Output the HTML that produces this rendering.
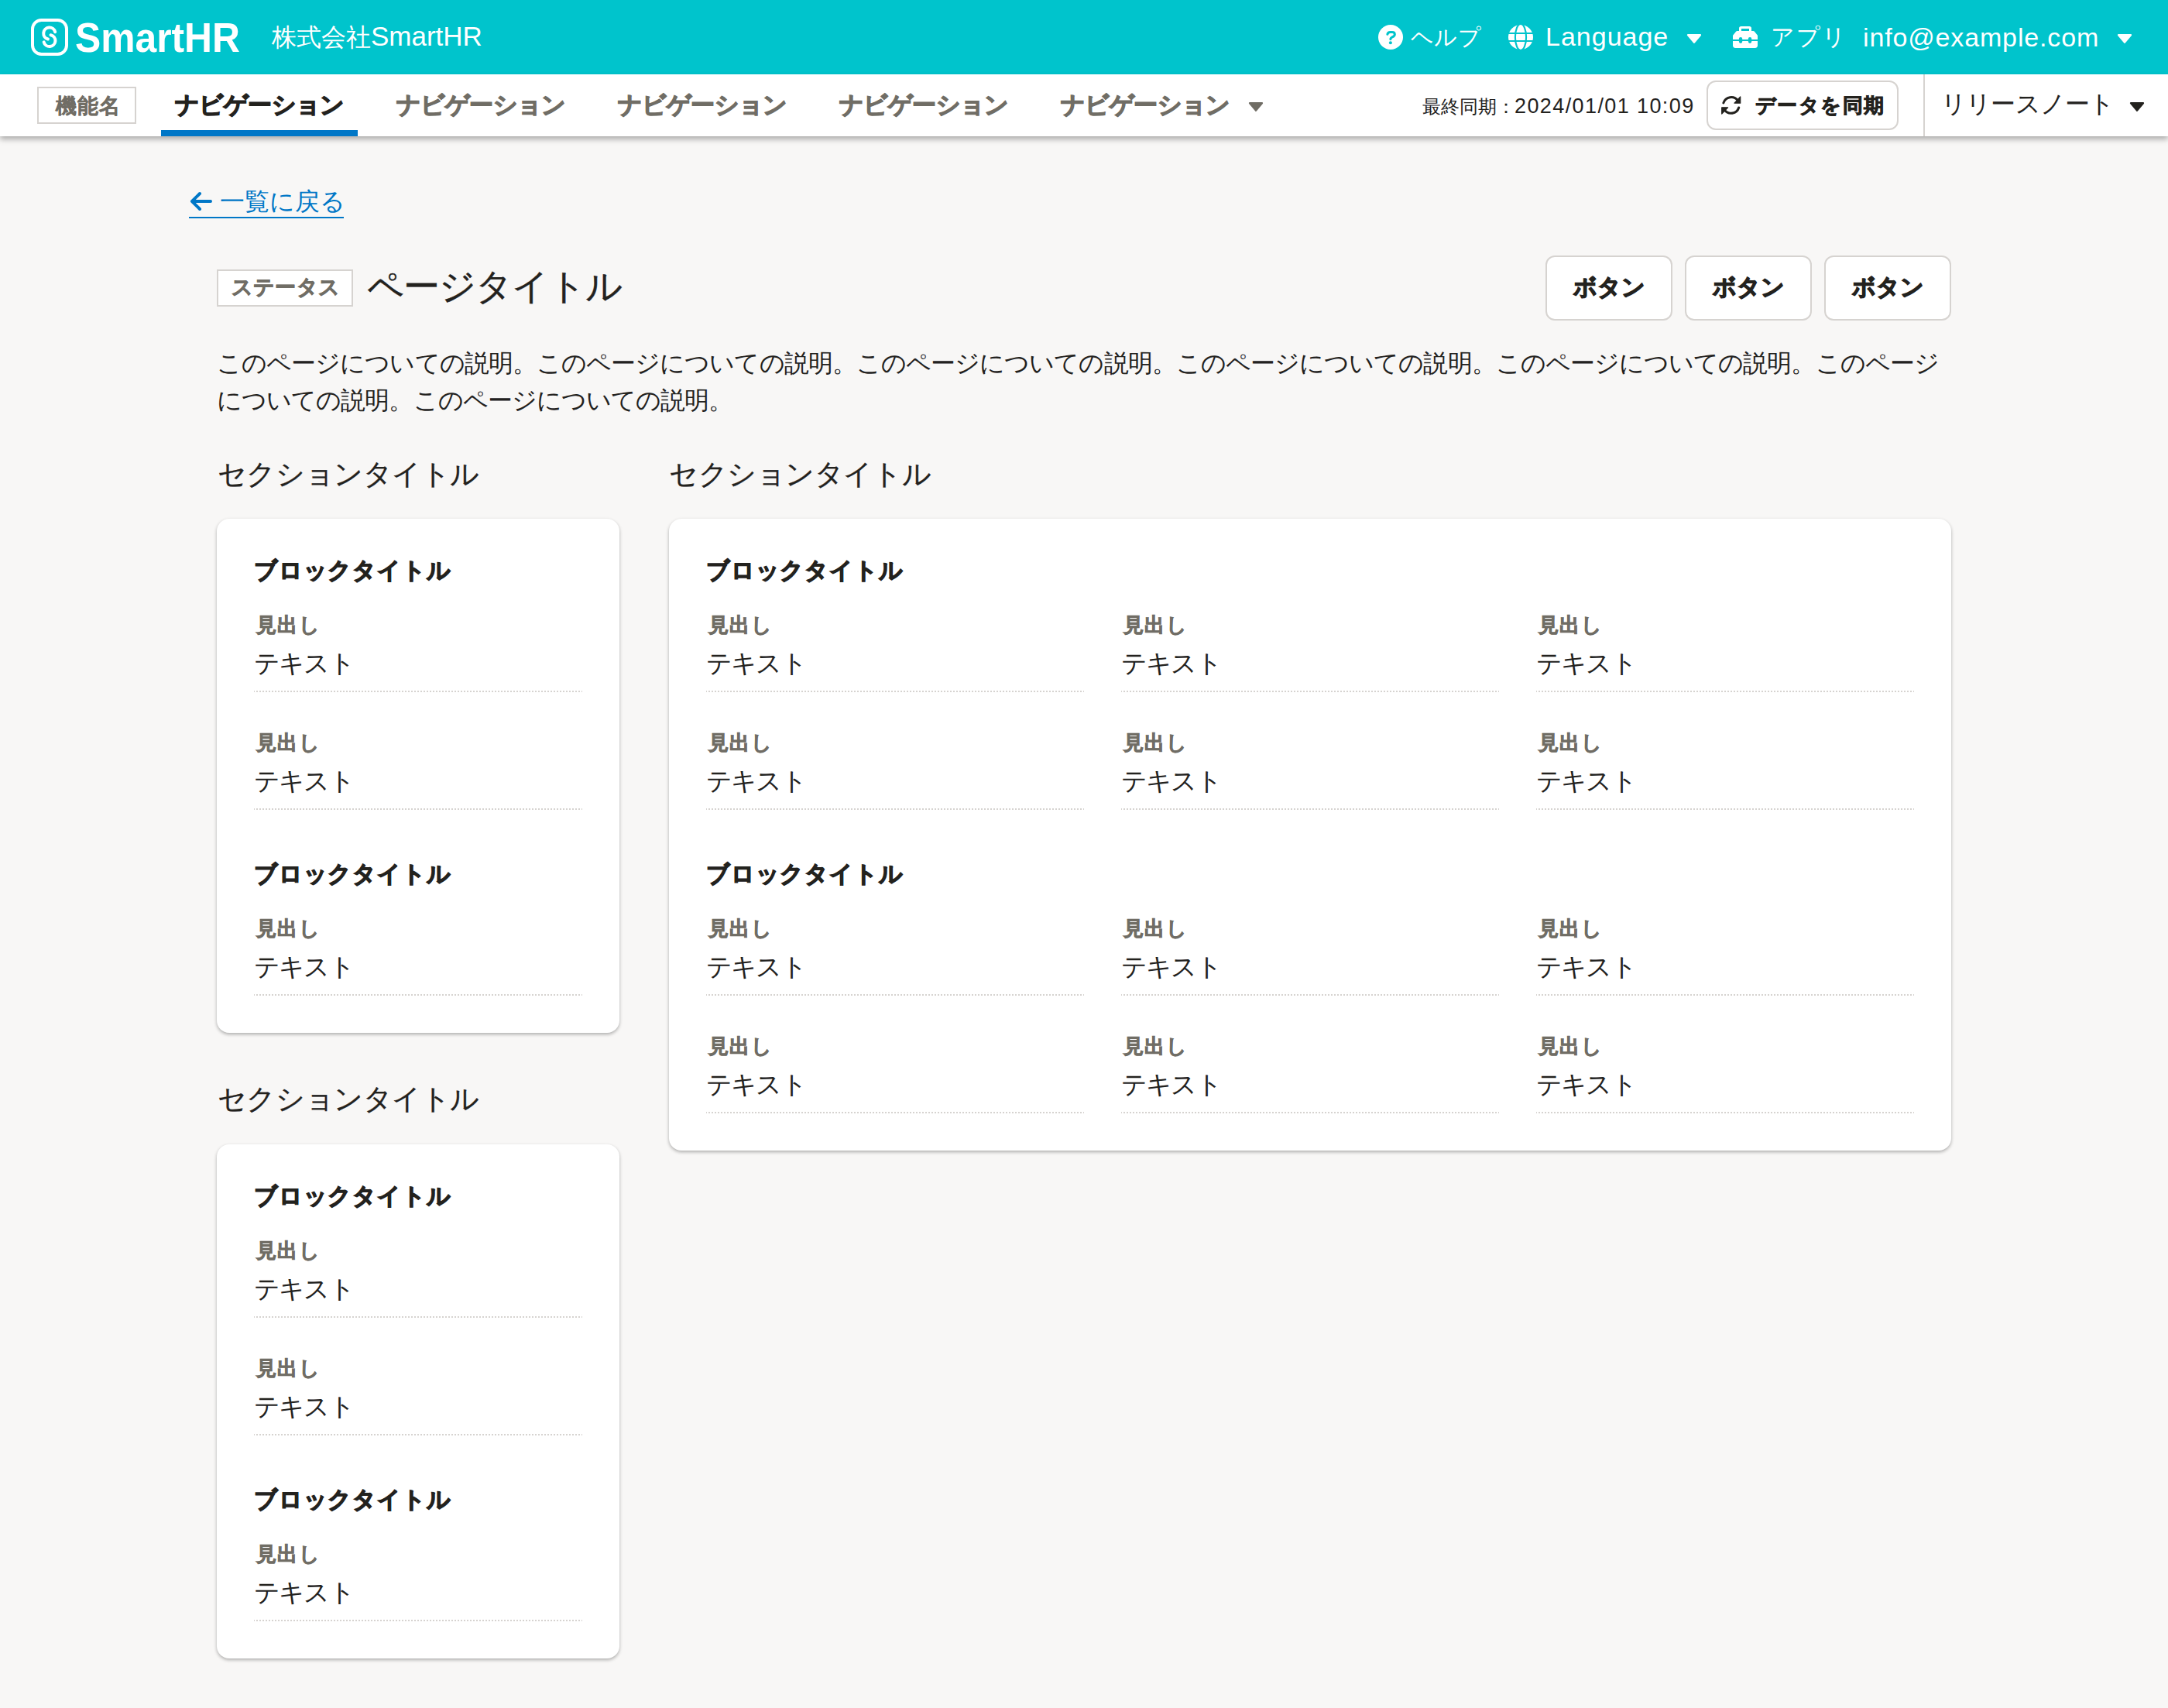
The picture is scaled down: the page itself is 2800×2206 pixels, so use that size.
<!DOCTYPE html>
<html lang="ja">
<head>
<meta charset="utf-8">
<style>
*{box-sizing:border-box;margin:0;padding:0}
html,body{width:2800px;height:2206px;overflow:hidden;background:#f8f7f6;font-family:"Liberation Sans",sans-serif;color:#23221e}
.a{position:absolute;white-space:nowrap;line-height:1}
.hdr{position:absolute;left:0;top:0;width:2800px;height:96px;background:#00c4cc}
.nav{position:absolute;left:0;top:96px;width:2800px;height:80px;background:#fff;box-shadow:0 4px 7px rgba(0,0,0,.3)}
.w{color:#fff}
.b{font-weight:bold;-webkit-text-stroke:1.3px currentColor}
.b28{-webkit-text-stroke-width:0.85px}
.g{color:#706d65}
.card{position:absolute;background:#fff;border-radius:16px;box-shadow:0 2px 4px rgba(0,0,0,.3)}
.dot{position:absolute;height:2px;background-image:linear-gradient(to right,#d6d3d0 2px,transparent 2px);background-size:4px 2px;background-position:3px 0}
.btn{position:absolute;background:#fff;border:2px solid #d6d3d0;border-radius:12px}
</style>
</head>
<body><div class="hdr"></div>
<svg class="a" style="left:40px;top:24px" width="48" height="48" viewBox="0 0 48 48">
<rect x="2" y="2" width="44" height="44" rx="11.5" fill="none" stroke="#fff" stroke-width="4"/>
<path d="M31.2 17.3 A7.6 7.6 0 1 0 21.9 26.5 M25.5 21.2 A7.5 7.5 0 1 1 16.7 30.4" fill="none" stroke="#fff" stroke-width="4" stroke-linecap="round"/>
</svg>
<svg class="a" style="left:96px;top:20px" width="220" height="56" viewBox="0 0 220 56">
<text x="1" y="47" font-family="Liberation Sans" font-weight="bold" font-size="53" fill="#fff" textLength="213" lengthAdjust="spacingAndGlyphs">SmartHR</text>
</svg>
<div class="a w" style="left:351px;top:29px;font-size:32px">株式会社<span style="font-size:35px">SmartHR</span></div>
<svg class="a" style="left:1780px;top:32px" width="32" height="32" viewBox="0 0 32 32">
<circle cx="16" cy="16" r="16" fill="#fff"/>
<path d="M11.9 12.3 C12.3 10.3 13.5 9.5 15.5 9.5 H18 C20 9.5 21.3 10.8 21.3 12.4 C21.3 14 20.2 14.8 18.6 15.6 C16.8 16.5 15.9 17 15.9 18.6" fill="none" stroke="#00c4cc" stroke-width="3.1" stroke-linecap="round" stroke-linejoin="round"/>
<circle cx="15.9" cy="23.2" r="2" fill="#00c4cc"/>
</svg>
<div class="a w" style="left:1822px;top:34.3px;font-size:28.5px;letter-spacing:0.35px">ヘルプ</div>
<svg class="a" style="left:1948px;top:32px" width="32" height="32" viewBox="0 0 32 32">
<circle cx="16" cy="16" r="16" fill="#fff"/>
<path d="M0 11 H32 M0 21 H32" stroke="#00c4cc" stroke-width="2.1"/>
<ellipse cx="16" cy="16" rx="7.1" ry="17" fill="none" stroke="#00c4cc" stroke-width="2.1"/>
</svg>
<div class="a w" style="left:1996px;top:30px;font-size:34px;letter-spacing:1px">Language</div>
<svg class="a" style="left:2178px;top:44px" width="20" height="12" viewBox="0 0 20 12"><path d="M2 1.2 H18 L10 10.8Z" fill="#fff" stroke="#fff" stroke-width="2.2" stroke-linejoin="round"/></svg>
<svg class="a" style="left:2238px;top:34px" width="32" height="28" viewBox="0 0 32 28">
<path d="M8 6 V2.8 Q8 0 10.8 0 H21.2 Q24 0 24 2.8 V6 H21 V3 H11 V6Z" fill="#fff"/>
<path d="M5.6 6 H26.4 Q27.2 6 27.7 6.6 L31.6 11.3 Q32 11.8 32 12.4 V17 H0 V12.4 Q0 11.8 0.4 11.3 L4.3 6.6 Q4.8 6 5.6 6Z" fill="#fff"/>
<path d="M0 19 H32 V24.6 Q32 28 28.6 28 H3.4 Q0 28 0 24.6Z" fill="#fff"/>
<rect x="7.9" y="13.9" width="4.3" height="8.1" rx="2.15" fill="#00c4cc"/><rect x="19.9" y="13.9" width="4.3" height="8.1" rx="2.15" fill="#00c4cc"/>
</svg>
<div class="a w" style="left:2286.5px;top:33px;font-size:29.5px;letter-spacing:2.1px">アプリ</div>
<div class="a w" style="left:2406px;top:31px;font-size:34px;letter-spacing:0.85px">info@example.com</div>
<svg class="a" style="left:2734px;top:44px" width="20" height="12" viewBox="0 0 20 12"><path d="M2 1.2 H18 L10 10.8Z" fill="#fff" stroke="#fff" stroke-width="2.2" stroke-linejoin="round"/></svg>
<div class="nav"></div>
<div class="a" style="left:48px;top:112px;width:128px;height:48px;border:2px solid #d6d3d0;background:#fff"></div>
<div class="a b b28 g" style="left:72px;top:123.5px;font-size:27px;letter-spacing:0.85px;-webkit-text-stroke-width:0.4px">機能名</div>
<div class="a b" style="left:226px;top:120.4px;font-size:30.5px;letter-spacing:-0.6px">ナビゲーション</div>
<div class="a" style="left:208px;top:168px;width:254px;height:8px;background:#0077c7"></div>
<div class="a b g" style="left:512px;top:120.4px;font-size:30.5px;letter-spacing:-0.6px">ナビゲーション</div>
<div class="a b g" style="left:798px;top:120.4px;font-size:30.5px;letter-spacing:-0.6px">ナビゲーション</div>
<div class="a b g" style="left:1084px;top:120.4px;font-size:30.5px;letter-spacing:-0.6px">ナビゲーション</div>
<div class="a b g" style="left:1370px;top:120.4px;font-size:30.5px;letter-spacing:-0.6px">ナビゲーション</div>
<svg class="a" style="left:1612px;top:132px" width="20" height="12" viewBox="0 0 20 12"><path d="M2 1.2 H18 L10 10.8Z" fill="#706d65" stroke="#706d65" stroke-width="2.2" stroke-linejoin="round"/></svg>
<div class="a" style="left:1837px;top:123.5px;font-size:24px">最終同期：<span style="font-size:27px;letter-spacing:1.4px;position:relative;left:-1px">2024/01/01 10:09</span></div>
<div class="btn" style="left:2204px;top:104px;width:248px;height:64px"></div>
<svg class="a" style="left:2222px;top:122px" width="28" height="28" viewBox="0 0 28 28">
<path d="M3.9 10.9 A10.5 10.5 0 0 1 22.4 7.88 M23.7 17 A10.5 10.5 0 0 1 5.2 19.92" fill="none" stroke="#23221e" stroke-width="3.1" stroke-linecap="round"/>
<path d="M25.7 3 L25.7 11.2 L18 11.2Z M1.7 16.8 L9.6 16.8 L1.7 25Z" fill="#23221e" stroke="#23221e" stroke-width="1.2" stroke-linejoin="round"/>
</svg>
<div class="a b b28" style="left:2267px;top:122.7px;font-size:26px;letter-spacing:1.4px">データを同期</div>
<div class="a" style="left:2484px;top:96px;width:2px;height:80px;background:#d6d3d0"></div>
<div class="a" style="left:2507px;top:119.3px;font-size:31.5px;letter-spacing:-0.83px">リリースノート</div>
<svg class="a" style="left:2750px;top:132px" width="20" height="12" viewBox="0 0 20 12"><path d="M2 1.2 H18 L10 10.8Z" fill="#23221e" stroke="#23221e" stroke-width="2.2" stroke-linejoin="round"/></svg>
<svg class="a" style="left:244px;top:246px" width="30" height="28" viewBox="0 0 30 28"><path d="M28 14 H5 M14 4 L4 14 L14 24" fill="none" stroke="#0077c7" stroke-width="4" stroke-linecap="round" stroke-linejoin="round"/></svg>
<div class="a " style="left:284px;top:244px;font-size:32px;color:#0077c7">一覧に戻る</div>
<div class="a" style="left:244px;top:280px;width:200px;height:2px;background:#0077c7"></div>
<div class="a" style="left:280px;top:348px;width:176px;height:48px;border:2px solid #d6d3d0;background:#fff"></div>
<div class="a b b28" style="left:298.7px;top:357.5px;font-size:27px;color:#706d65;letter-spacing:0.33px">ステータス</div>
<div class="a " style="left:474px;top:346px;font-size:47px;letter-spacing:-0.9px;-webkit-text-stroke:0.4px #23221e">ページタイトル</div>
<div class="btn" style="left:1996px;top:330px;width:164px;height:84px"></div>
<div class="a b" style="left:2031.6px;top:356.2px;font-size:29.5px;letter-spacing:0.1px">ボタン</div>
<div class="btn" style="left:2176px;top:330px;width:164px;height:84px"></div>
<div class="a b" style="left:2211.6px;top:356.2px;font-size:29.5px;letter-spacing:0.1px">ボタン</div>
<div class="btn" style="left:2356px;top:330px;width:164px;height:84px"></div>
<div class="a b" style="left:2391.6px;top:356.2px;font-size:29.5px;letter-spacing:0.1px">ボタン</div>
<div class="a " style="left:280px;top:453px;font-size:32px;letter-spacing:-0.93px">このページについての説明。このページについての説明。このページについての説明。このページについての説明。このページについての説明。このページ</div>
<div class="a " style="left:280px;top:501px;font-size:32px;letter-spacing:-0.93px">についての説明。このページについての説明。</div>
<div class="a " style="left:280.8px;top:595.3px;font-size:36.5px;letter-spacing:-0.42px;-webkit-text-stroke:0.3px #23221e">セクションタイトル</div>
<div class="card" style="left:280px;top:670px;width:520px;height:664px"></div>
<div class="a b" style="left:328px;top:722.4px;font-size:29.5px;letter-spacing:0.8px">ブロックタイトル</div>
<div class="a b g b28" style="left:330.6px;top:794.5px;font-size:25.5px;letter-spacing:1.6px">見出し</div>
<div class="a " style="left:328px;top:840.5px;font-size:32.5px;letter-spacing:-1.77px">テキスト</div>
<div class="dot" style="left:328px;top:892px;width:424px"></div>
<div class="a b g b28" style="left:330.6px;top:946.5px;font-size:25.5px;letter-spacing:1.6px">見出し</div>
<div class="a " style="left:328px;top:992.5px;font-size:32.5px;letter-spacing:-1.77px">テキスト</div>
<div class="dot" style="left:328px;top:1044px;width:424px"></div>
<div class="a b" style="left:328px;top:1114.4px;font-size:29.5px;letter-spacing:0.8px">ブロックタイトル</div>
<div class="a b g b28" style="left:330.6px;top:1186.5px;font-size:25.5px;letter-spacing:1.6px">見出し</div>
<div class="a " style="left:328px;top:1232.5px;font-size:32.5px;letter-spacing:-1.77px">テキスト</div>
<div class="dot" style="left:328px;top:1284px;width:424px"></div>
<div class="a " style="left:280.8px;top:1402px;font-size:36.5px;letter-spacing:-0.42px;-webkit-text-stroke:0.3px #23221e">セクションタイトル</div>
<div class="card" style="left:280px;top:1478px;width:520px;height:664px"></div>
<div class="a b" style="left:328px;top:1530.4px;font-size:29.5px;letter-spacing:0.8px">ブロックタイトル</div>
<div class="a b g b28" style="left:330.6px;top:1602.5px;font-size:25.5px;letter-spacing:1.6px">見出し</div>
<div class="a " style="left:328px;top:1648.5px;font-size:32.5px;letter-spacing:-1.77px">テキスト</div>
<div class="dot" style="left:328px;top:1700px;width:424px"></div>
<div class="a b g b28" style="left:330.6px;top:1754.5px;font-size:25.5px;letter-spacing:1.6px">見出し</div>
<div class="a " style="left:328px;top:1800.5px;font-size:32.5px;letter-spacing:-1.77px">テキスト</div>
<div class="dot" style="left:328px;top:1852px;width:424px"></div>
<div class="a b" style="left:328px;top:1922.4px;font-size:29.5px;letter-spacing:0.8px">ブロックタイトル</div>
<div class="a b g b28" style="left:330.6px;top:1994.5px;font-size:25.5px;letter-spacing:1.6px">見出し</div>
<div class="a " style="left:328px;top:2040.5px;font-size:32.5px;letter-spacing:-1.77px">テキスト</div>
<div class="dot" style="left:328px;top:2092px;width:424px"></div>
<div class="a " style="left:864px;top:595.3px;font-size:36.5px;letter-spacing:-0.42px;-webkit-text-stroke:0.3px #23221e">セクションタイトル</div>
<div class="card" style="left:864px;top:670px;width:1656px;height:816px"></div>
<div class="a b" style="left:912px;top:722.4px;font-size:29.5px;letter-spacing:0.8px">ブロックタイトル</div>
<div class="a b g b28" style="left:914.6px;top:794.5px;font-size:25.5px;letter-spacing:1.6px">見出し</div>
<div class="a " style="left:912px;top:840.5px;font-size:32.5px;letter-spacing:-1.77px">テキスト</div>
<div class="dot" style="left:912px;top:892px;width:488px"></div>
<div class="a b g b28" style="left:1450.6px;top:794.5px;font-size:25.5px;letter-spacing:1.6px">見出し</div>
<div class="a " style="left:1448px;top:840.5px;font-size:32.5px;letter-spacing:-1.77px">テキスト</div>
<div class="dot" style="left:1448px;top:892px;width:488px"></div>
<div class="a b g b28" style="left:1986.6px;top:794.5px;font-size:25.5px;letter-spacing:1.6px">見出し</div>
<div class="a " style="left:1984px;top:840.5px;font-size:32.5px;letter-spacing:-1.77px">テキスト</div>
<div class="dot" style="left:1984px;top:892px;width:488px"></div>
<div class="a b g b28" style="left:914.6px;top:946.5px;font-size:25.5px;letter-spacing:1.6px">見出し</div>
<div class="a " style="left:912px;top:992.5px;font-size:32.5px;letter-spacing:-1.77px">テキスト</div>
<div class="dot" style="left:912px;top:1044px;width:488px"></div>
<div class="a b g b28" style="left:1450.6px;top:946.5px;font-size:25.5px;letter-spacing:1.6px">見出し</div>
<div class="a " style="left:1448px;top:992.5px;font-size:32.5px;letter-spacing:-1.77px">テキスト</div>
<div class="dot" style="left:1448px;top:1044px;width:488px"></div>
<div class="a b g b28" style="left:1986.6px;top:946.5px;font-size:25.5px;letter-spacing:1.6px">見出し</div>
<div class="a " style="left:1984px;top:992.5px;font-size:32.5px;letter-spacing:-1.77px">テキスト</div>
<div class="dot" style="left:1984px;top:1044px;width:488px"></div>
<div class="a b" style="left:912px;top:1114.4px;font-size:29.5px;letter-spacing:0.8px">ブロックタイトル</div>
<div class="a b g b28" style="left:914.6px;top:1186.5px;font-size:25.5px;letter-spacing:1.6px">見出し</div>
<div class="a " style="left:912px;top:1232.5px;font-size:32.5px;letter-spacing:-1.77px">テキスト</div>
<div class="dot" style="left:912px;top:1284px;width:488px"></div>
<div class="a b g b28" style="left:1450.6px;top:1186.5px;font-size:25.5px;letter-spacing:1.6px">見出し</div>
<div class="a " style="left:1448px;top:1232.5px;font-size:32.5px;letter-spacing:-1.77px">テキスト</div>
<div class="dot" style="left:1448px;top:1284px;width:488px"></div>
<div class="a b g b28" style="left:1986.6px;top:1186.5px;font-size:25.5px;letter-spacing:1.6px">見出し</div>
<div class="a " style="left:1984px;top:1232.5px;font-size:32.5px;letter-spacing:-1.77px">テキスト</div>
<div class="dot" style="left:1984px;top:1284px;width:488px"></div>
<div class="a b g b28" style="left:914.6px;top:1338.5px;font-size:25.5px;letter-spacing:1.6px">見出し</div>
<div class="a " style="left:912px;top:1384.5px;font-size:32.5px;letter-spacing:-1.77px">テキスト</div>
<div class="dot" style="left:912px;top:1436px;width:488px"></div>
<div class="a b g b28" style="left:1450.6px;top:1338.5px;font-size:25.5px;letter-spacing:1.6px">見出し</div>
<div class="a " style="left:1448px;top:1384.5px;font-size:32.5px;letter-spacing:-1.77px">テキスト</div>
<div class="dot" style="left:1448px;top:1436px;width:488px"></div>
<div class="a b g b28" style="left:1986.6px;top:1338.5px;font-size:25.5px;letter-spacing:1.6px">見出し</div>
<div class="a " style="left:1984px;top:1384.5px;font-size:32.5px;letter-spacing:-1.77px">テキスト</div>
<div class="dot" style="left:1984px;top:1436px;width:488px"></div>
</body>
</html>
